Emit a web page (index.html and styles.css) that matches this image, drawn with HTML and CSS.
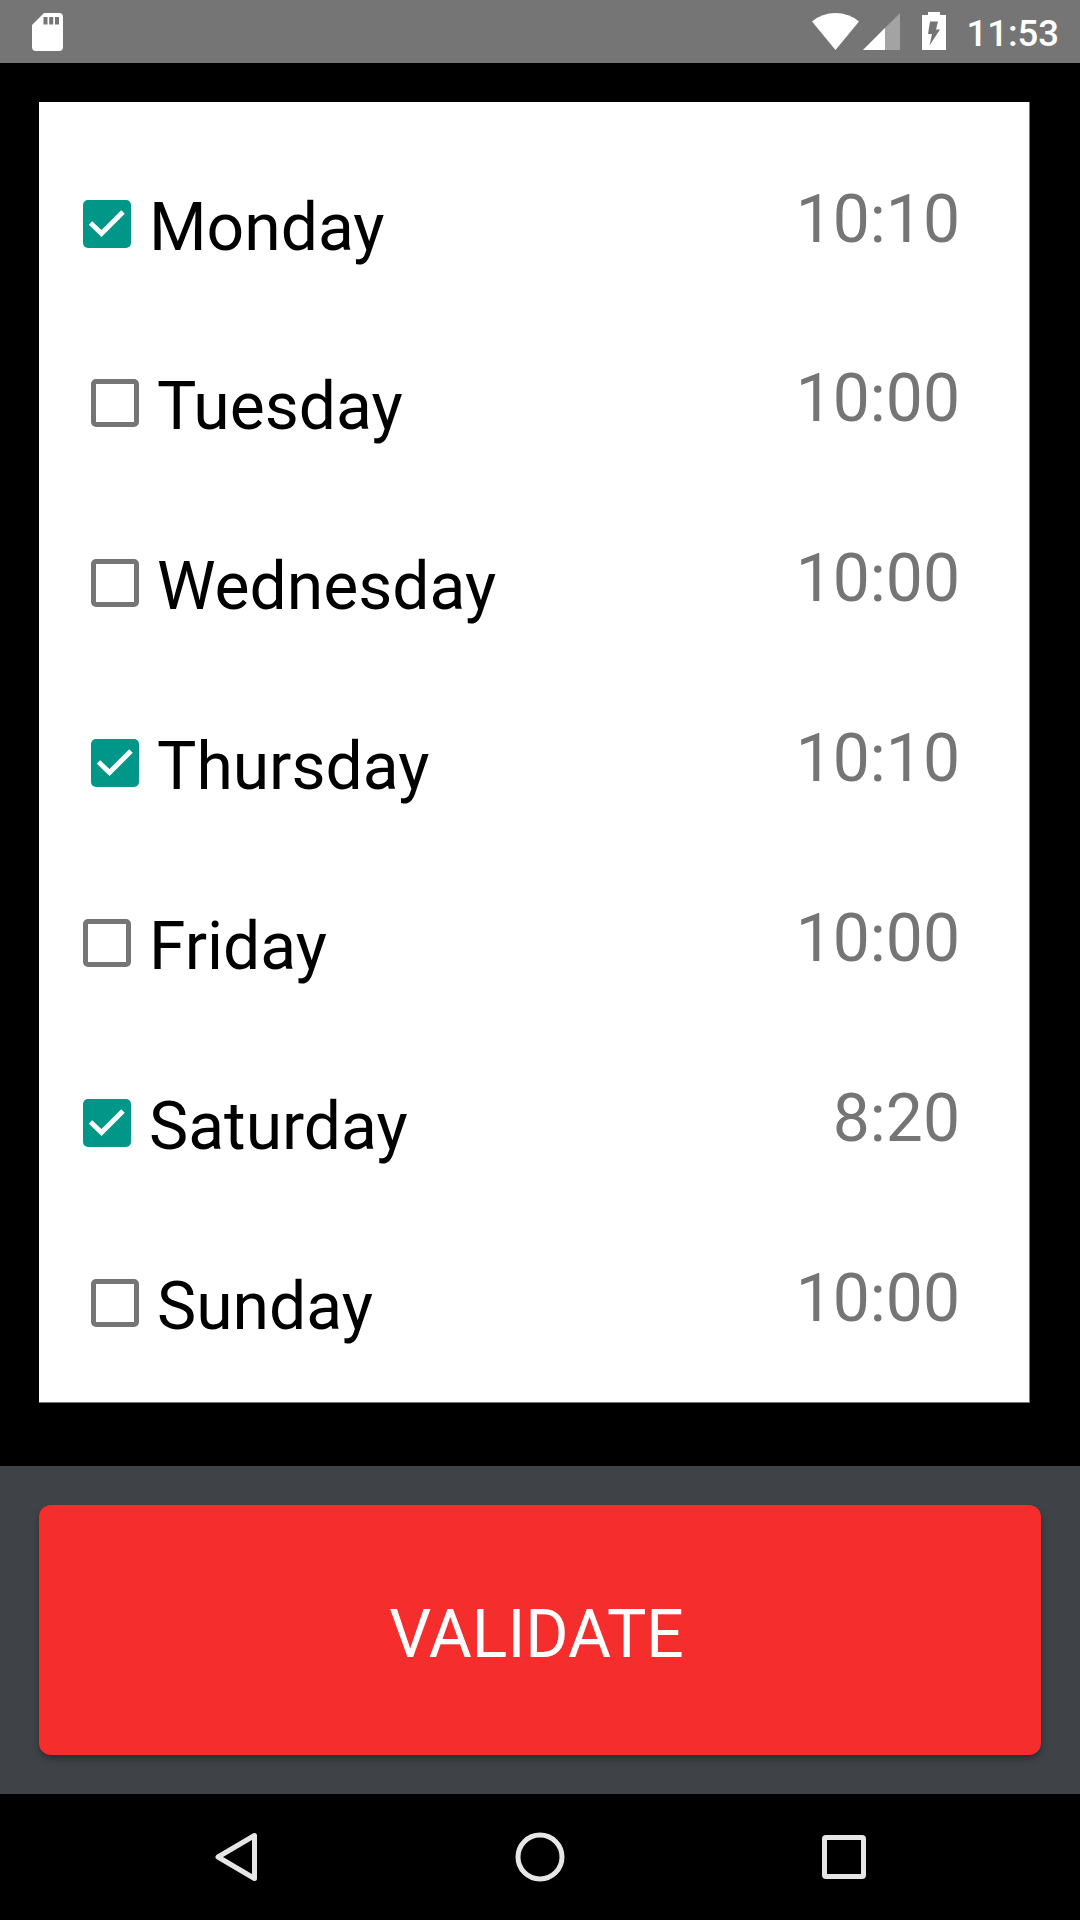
FILE: index.html
```html
<!DOCTYPE html>
<html lang="en">
<head>
  <meta charset="UTF-8" />
  <meta name="viewport" content="width=device-width, initial-scale=1.0" />
  <title>Weekly Alarm</title>
  <link rel="stylesheet" href="styles.css">
</head>
<body>
  <header class="status-bar">
    <svg class="sd-icon" width="31" height="38" viewBox="0 0 31 38">
      <path fill="#fff" fill-rule="evenodd" d="M12 0H27a4 4 0 0 1 4 4V34a4 4 0 0 1-4 4H4a4 4 0 0 1-4-4V12ZM11.500 4v7.500h4V4ZM17.200 4v7.500h4V4ZM23 4v7.500h4V4Z"/>
    </svg>
    <div class="status-right">
      <svg class="wifi-icon" width="47" height="37" viewBox="0 0 47 37">
        <path fill="#fff" d="M0 8.500Q10 0 23.500 0T47 8.500L23.500 37Z"/>
      </svg>
      <svg class="signal-icon" width="37" height="37" viewBox="0 0 37 37">
        <path fill="#a3a3a3" d="M37 0V37H0Z"/>
        <path fill="#fff" d="M22 15V37H0Z"/>
      </svg>
      <svg class="battery-icon" width="24" height="38" viewBox="0 0 24 38">
        <path fill="#fff" d="M6 0H18V3H24V38H0V3H6Z"/>
        <path fill="#757575" d="M8 9.500H16L14 17.500H18L7.500 33.500L10 22H6Z"/>
      </svg>
      <span class="clock">11:53</span>
    </div>
  </header>

  <main class="schedule">
    <div class="days">
      <div class="day">
        <label class="day-label">
          <span class="box checked"><svg width="48" height="48" viewBox="0 0 48 48"><path d="M7.500 23L18.500 33.500L40 12"/></svg></span>
          <span>Monday</span>
        </label>
        <span class="time">10:10</span>
      </div>
      <div class="day">
        <label class="day-label indent">
          <span class="box"></span>
          <span>Tuesday</span>
        </label>
        <span class="time">10:00</span>
      </div>
      <div class="day">
        <label class="day-label indent">
          <span class="box"></span>
          <span>Wednesday</span>
        </label>
        <span class="time">10:00</span>
      </div>
      <div class="day">
        <label class="day-label indent">
          <span class="box checked"><svg width="48" height="48" viewBox="0 0 48 48"><path d="M7.500 23L18.500 33.500L40 12"/></svg></span>
          <span>Thursday</span>
        </label>
        <span class="time">10:10</span>
      </div>
      <div class="day">
        <label class="day-label">
          <span class="box"></span>
          <span>Friday</span>
        </label>
        <span class="time">10:00</span>
      </div>
      <div class="day">
        <label class="day-label">
          <span class="box checked"><svg width="48" height="48" viewBox="0 0 48 48"><path d="M7.500 23L18.500 33.500L40 12"/></svg></span>
          <span>Saturday</span>
        </label>
        <span class="time">8:20</span>
      </div>
      <div class="day">
        <label class="day-label indent">
          <span class="box"></span>
          <span>Sunday</span>
        </label>
        <span class="time">10:00</span>
      </div>
    </div>
  </main>

  <footer class="actions">
    <button class="validate">VALIDATE</button>
  </footer>

  <nav class="nav-bar">
    <svg width="50" height="50" viewBox="0 0 50 50"><path d="M43.500 3.500V46.500L7 25Z"/></svg>
    <svg width="50" height="50" viewBox="0 0 50 50"><circle cx="25" cy="25" r="22"/></svg>
    <svg width="50" height="50" viewBox="0 0 50 50"><rect x="5.500" y="5.500" width="39" height="39" rx="1.500"/></svg>
  </nav>
</body>
</html>
```
FILE: styles.css
```css
body {
  margin: 0;
  font-family: Roboto, sans-serif;
  background: #000;
  display: flex;
  flex-direction: column;
  width: 1080px;
  height: 1920px;
}

.status-bar {
  display: flex;
  justify-content: space-between;
  align-items: flex-start;
  box-sizing: border-box;
  height: 63px;
  padding: 12px 21px 0 32px;
  background: #757575;
}

.sd-icon {
  margin-top: 1px;
}

.status-right {
  display: flex;
  align-items: flex-start;
}

.wifi-icon {
  margin: 1px 4px 0 0;
}

.signal-icon {
  margin: 1px 22px 0 0;
}

.battery-icon {
  margin-right: 20px;
}

.clock {
  color: #fff;
  font-size: 36.500px;
  font-weight: 500;
  line-height: 44px;
}

.schedule {
  height: 1403px;
  box-sizing: border-box;
  padding: 39px 50px 0 39px;
}

.days {
  box-sizing: border-box;
  width: 991px;
  height: 1301px;
  padding-top: 31px;
  background: #fff;
  border-right: 1px solid #777;
  border-bottom: 1px solid #777;
}

.day {
  display: flex;
  justify-content: space-between;
  align-items: flex-start;
  height: 180px;
  padding: 0 69px 0 44px;
}

.day:first-child {
  height: 179px;
}

.day-label {
  display: flex;
  align-items: flex-start;
  gap: 18px;
  margin-top: 56px;
  color: #000;
  font-size: 66px;
  line-height: 78px;
}

.indent {
  margin-left: 8px;
}

.box {
  box-sizing: border-box;
  width: 48px;
  height: 48px;
  margin-top: 11px;
  border: 5px solid #757575;
  border-radius: 5px;
}

.checked {
  border: none;
  background: #009688;
}

.checked svg {
  display: block;
  fill: none;
  stroke: #fff;
  stroke-width: 5;
}

.time {
  margin-top: 48px;
  color: #757575;
  font-size: 66px;
  line-height: 78px;
}

.actions {
  box-sizing: border-box;
  height: 328px;
  padding: 39px;
  background: #3f4347;
}

.validate {
  display: block;
  width: 1002px;
  height: 250px;
  padding: 8px 7px 0 0;
  border: none;
  border-radius: 12px;
  background: #f62d2d;
  box-shadow: 0 4px 6px rgba(0,0,0,0.3);
  color: #fff;
  font-family: Roboto, sans-serif;
  font-size: 66px;
}

.nav-bar {
  display: flex;
  justify-content: center;
  align-items: center;
  gap: 254px;
  height: 126px;
}

.nav-bar svg {
  fill: none;
  stroke: #e6e6e6;
  stroke-width: 5;
  stroke-linejoin: round;
}
```
